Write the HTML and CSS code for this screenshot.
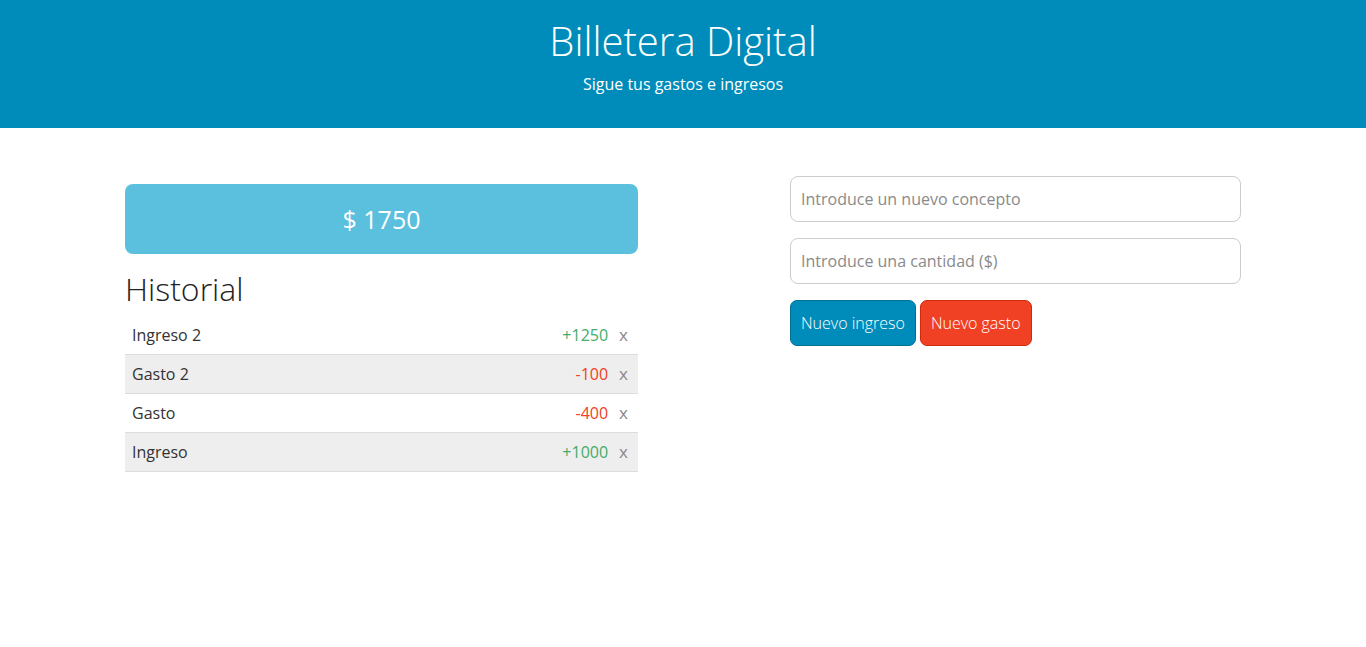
FILE: index.html
```html
<!DOCTYPE html>
<html lang="es">
<head>
<meta charset="utf-8">
<title>Billetera Digital</title>
<link rel="stylesheet" href="styles.css">
</head>
<body>
<header class="hero">
  <h1 class="hero-title">Billetera Digital</h1>
  <p class="hero-sub">Sigue tus gastos e ingresos</p>
</header>
<main class="main">
  <section class="col-left">
    <div class="balance">$ 1750</div>
    <h2 class="history-title">Historial</h2>
    <ul class="history">
      <li class="row"><span class="concept">Ingreso 2</span><span class="amount pos">+1250</span><span class="del">x</span></li>
      <li class="row alt"><span class="concept">Gasto 2</span><span class="amount neg">-100</span><span class="del">x</span></li>
      <li class="row"><span class="concept">Gasto</span><span class="amount neg">-400</span><span class="del">x</span></li>
      <li class="row alt"><span class="concept">Ingreso</span><span class="amount pos">+1000</span><span class="del">x</span></li>
    </ul>
  </section>
  <section class="col-right">
    <input class="field" type="text" placeholder="Introduce un nuevo concepto">
    <input class="field" type="text" placeholder="Introduce una cantidad ($)">
    <div class="actions">
      <button class="btn btn-in">Nuevo ingreso</button>
      <button class="btn btn-out">Nuevo gasto</button>
    </div>
  </section>
</main>
</body>
</html>
```
FILE: styles.css
```css
* { box-sizing: border-box; }
body {
  margin: 0;
  font-family: "Open Sans", "Liberation Sans", sans-serif;
  color: #333;
  background: #fff;
}
.hero {
  background: #008cba;
  color: #fff;
  text-align: center;
  height: 128px;
  padding-top: 16px;
}
.hero-title {
  margin: 0;
  font-size: 40px;
  font-weight: 300;
  line-height: 50px;
}
.hero-sub {
  margin: 7px 0 0;
  font-size: 16px;
  line-height: 22px;
}
.main {
  display: flex;
  padding: 48px 0 0 125px;
  gap: 152px;
}
.col-left {
  width: 513px;
  margin-top: 8px;
}
.balance {
  height: 70px;
  background: #5bc0de;
  border-radius: 8px;
  color: #fff;
  font-size: 25px;
  display: flex;
  align-items: center;
  justify-content: center;
}
.history-title {
  margin: 14px 0 6px;
  font-size: 32px;
  font-weight: 300;
  line-height: 42px;
  color: #222;
}
.history {
  list-style: none;
  margin: 0;
  padding: 0;
}
.row {
  display: flex;
  align-items: baseline;
  height: 39px;
  padding: 7px 10px 0 7px;
  border-bottom: 1px solid #ddd;
  font-size: 16px;
  line-height: 24px;
}
.row.alt { background: #eee; }
.concept { flex: 1; color: #333; }
.amount { margin-right: 11px; }
.pos { color: #43ac6a; }
.neg { color: #f04124; }
.del { color: #888; font-size: 17px; }
.col-right {
  width: 451px;
  display: flex;
  flex-direction: column;
  gap: 16px;
}
.field {
  height: 46px;
  border: 1px solid #ccc;
  border-radius: 8px;
  padding: 0 10px;
  font-family: inherit;
  font-size: 16px;
  color: #333;
  outline: none;
}
.field::placeholder { color: #8a8a8a; }
.actions {
  display: flex;
  gap: 4px;
}
.btn {
  height: 46px;
  border-radius: 7px;
  padding: 0 10px;
  color: #fff;
  font-family: inherit;
  font-size: 16px;
  font-weight: 300;
  cursor: pointer;
}
.btn-in { background: #008cba; border: 1px solid #007095; }
.btn-out { background: #f04124; border: 1px solid #cf2a0e; }
```
